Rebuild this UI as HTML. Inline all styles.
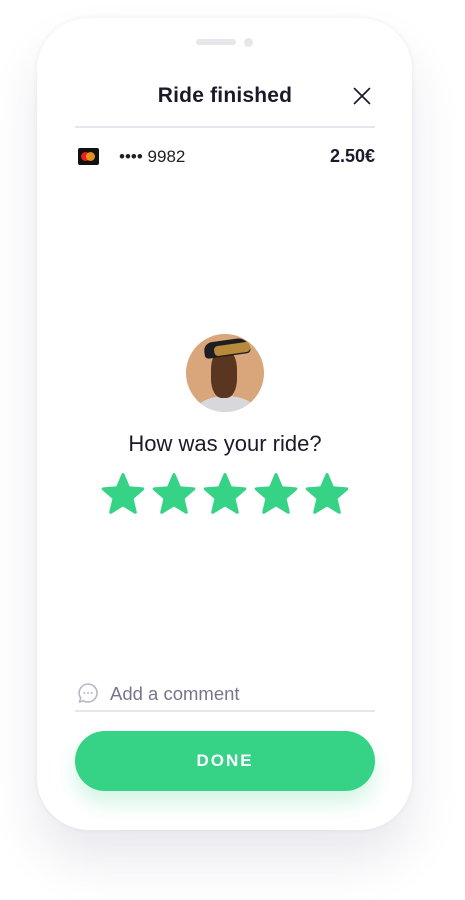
<!DOCTYPE html>
<html><head><meta charset="utf-8"><style>
html,body{margin:0;padding:0;background:#fff;width:465px;height:900px;overflow:hidden;font-family:"Liberation Sans",sans-serif;}
.phone{position:absolute;left:37px;top:18px;width:375px;height:812px;border-radius:52px;background:#fff;box-shadow:0 30px 50px rgba(40,40,90,0.10),0 0 6px rgba(40,40,90,0.06);}
.spk{position:absolute;left:196px;top:39px;width:40px;height:6px;border-radius:3px;background:#e6e6ec}
.cam{position:absolute;left:244px;top:38px;width:9px;height:9px;border-radius:50%;background:#e6e6ec}
.title{position:absolute;left:0;width:450px;top:84px;text-align:center;font-size:21px;font-weight:bold;color:#1a1a2a;letter-spacing:0.2px}
.hr{position:absolute;left:75px;width:300px;height:1.5px;background:#e6e6ee}
.t{position:absolute;color:#1a1a2a}
.star{position:absolute;top:472px;width:46px;height:44px}
.btn{position:absolute;left:75px;top:731px;width:300px;height:60px;border-radius:30px;background:#36d286;box-shadow:0 12px 20px rgba(54,210,134,0.22);color:#fff;font-weight:bold;font-size:17px;letter-spacing:2px;text-align:center;line-height:60px}
</style></head><body>
<div class="phone"></div>
<div class="spk"></div><div class="cam"></div>
<div class="title">Ride finished</div>
<svg style="position:absolute;left:353px;top:87px" width="18" height="18" viewBox="0 0 18 18"><path d="M1.5 1.5L16.5 16.5M16.5 1.5L1.5 16.5" stroke="#1a1a2a" stroke-width="1.7" stroke-linecap="round"/></svg>
<div class="hr" style="top:126px"></div>
<div style="position:absolute;left:78px;top:148px;width:21px;height:17px;background:#111;border-radius:2px"></div>
<div style="position:absolute;left:81px;top:152px;width:9px;height:9px;border-radius:50%;background:#e8201c"></div>
<div style="position:absolute;left:86px;top:152px;width:9px;height:9px;border-radius:50%;background:#f59e1a;opacity:.9"></div>
<div class="t" style="left:119px;top:147px;font-size:17px;color:#222">•••• 9982</div>
<div class="t" style="right:90px;top:146px;font-size:18px;font-weight:bold;text-align:right">2.50€</div>
<div style="position:absolute;left:186px;top:334px;width:78px;height:78px;border-radius:50%;background:#d9a57a;overflow:hidden">
<div style="position:absolute;left:10px;top:62px;width:60px;height:30px;border-radius:50% 50% 0 0;background:#d8d8dc"></div>
<div style="position:absolute;left:25px;top:16px;width:26px;height:48px;border-radius:40%;background:#5a3520"></div>
<div style="position:absolute;left:18px;top:6px;width:46px;height:16px;border-radius:14px 20px 6px 6px;background:#1d1d22;transform:rotate(-8deg)"></div>
<div style="position:absolute;left:28px;top:10px;width:36px;height:10px;border-radius:4px;background:#b88a3c;transform:rotate(-8deg)"></div>
</div>
<div class="t" style="left:0;width:450px;text-align:center;top:431px;font-size:22px;color:#1a1a2a">How was your ride?</div>
<svg width="0" height="0" style="position:absolute"><defs><path id="s" d="M23 2.5l5.6 13.2 14.2 1.2-10.8 9.4 3.3 14-12.3-7.5-12.3 7.5 3.3-14L3.2 16.9l14.2-1.2z" fill="#36d286" stroke="#36d286" stroke-width="3" stroke-linejoin="round"/></defs></svg>
<svg class="star" style="left:100px" viewBox="0 0 46 44"><use href="#s"/></svg>
<svg class="star" style="left:151px" viewBox="0 0 46 44"><use href="#s"/></svg>
<svg class="star" style="left:202px" viewBox="0 0 46 44"><use href="#s"/></svg>
<svg class="star" style="left:253px" viewBox="0 0 46 44"><use href="#s"/></svg>
<svg class="star" style="left:304px" viewBox="0 0 46 44"><use href="#s"/></svg>
<svg style="position:absolute;left:77px;top:682px" width="22" height="22" viewBox="0 0 22 22"><path d="M11 2a9 9 0 1 1-4.5 16.8L2.5 20l1.2-4A9 9 0 0 1 11 2z" fill="none" stroke="#b8b6c4" stroke-width="1.6" stroke-linejoin="round"/><circle cx="7.3" cy="11" r="1" fill="#b8b6c4"/><circle cx="11" cy="11" r="1" fill="#b8b6c4"/><circle cx="14.7" cy="11" r="1" fill="#b8b6c4"/></svg>
<div class="t" style="left:110px;top:683px;font-size:18.5px;color:#77758a">Add a comment</div>
<div class="hr" style="top:710px;height:2px"></div>
<div class="btn">DONE</div>
</body></html>
